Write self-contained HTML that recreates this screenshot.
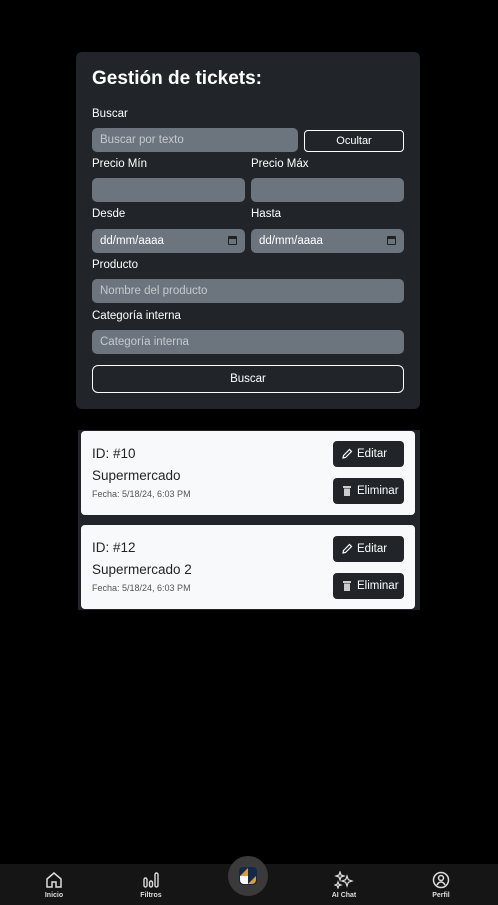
<!DOCTYPE html>
<html><head><meta charset="utf-8"><style>
*{box-sizing:border-box;margin:0;padding:0}
body{width:498px;height:905px;background:#000;font-family:"Liberation Sans",sans-serif;position:relative;overflow:hidden;color:#fff}
.card{position:absolute;left:76px;top:52px;width:344px;height:357px;background:#212529;border-radius:6px}
.abs{position:absolute}
h1{position:absolute;left:16px;top:16px;font-size:19px;font-weight:bold}
.lbl{position:absolute;font-size:11.5px}
.in{position:absolute;background:#6c757d;border-radius:5px;height:24px;line-height:24px;font-size:11.5px;color:#c5c9cd;padding:0 8px}
.in.v{color:#fff}
.btn{position:absolute;border:1px solid #fff;border-radius:4px;font-size:11px;text-align:center;color:#fff}
.cal{position:absolute;right:8px;top:7px;width:9px;height:9px;border:1.5px solid #222;border-top-width:3px;border-radius:1px}
.list{position:absolute;left:78px;top:430px;width:342px;height:180px;background:#212529}
.t{position:absolute;left:3px;width:334px;background:#f8f9fa;border-radius:4px;color:#212529}
.t .id{position:absolute;left:11px;top:15px;font-size:13.5px}
.t .n{position:absolute;left:11px;top:37px;font-size:13.5px}
.t .f{position:absolute;left:11px;top:58px;font-size:9px;color:#555}
.b{position:absolute;left:252px;width:71px;height:26px;line-height:26px;background:#212529;border-radius:4px;color:#fff;font-size:11.5px;padding-left:24px}
.b svg{position:absolute;left:8px;top:7px}
.nav{position:absolute;left:0;top:864px;width:498px;height:41px;background:#151515}
.ni{position:absolute;top:7px;width:60px;text-align:center;font-size:7px;font-weight:bold;color:#ddd}
.ni svg{display:block;margin:0 auto 3px}
</style></head><body>
<div class="card">
<h1>Gestión de tickets:</h1>
<div class="lbl" style="left:16px;top:56px">Buscar</div>
<div class="in" style="left:16px;top:76px;width:206px">Buscar por texto</div>
<div class="btn" style="left:228px;top:78px;width:100px;height:22px;line-height:20px">Ocultar</div>
<div class="lbl" style="left:16px;top:106px">Precio Mín</div>
<div class="lbl" style="left:175px;top:106px">Precio Máx</div>
<div class="in" style="left:16px;top:126px;width:153px"></div>
<div class="in" style="left:175px;top:126px;width:153px"></div>
<div class="lbl" style="left:16px;top:156px">Desde</div>
<div class="lbl" style="left:175px;top:156px">Hasta</div>
<div class="in v" style="left:16px;top:177px;width:153px">dd/mm/aaaa<span class="cal"></span></div>
<div class="in v" style="left:175px;top:177px;width:153px">dd/mm/aaaa<span class="cal"></span></div>
<div class="lbl" style="left:16px;top:207px">Producto</div>
<div class="in" style="left:16px;top:227px;width:312px">Nombre del producto</div>
<div class="lbl" style="left:16px;top:258px">Categoría interna</div>
<div class="in" style="left:16px;top:278px;width:312px">Categoría interna</div>
<div class="btn" style="left:16px;top:313px;width:312px;height:28px;line-height:26px;border-radius:6px;font-size:11.5px">Buscar</div>
</div>
<div class="list">
<div class="t" style="top:1px;height:84px"><div class="id">ID: #10</div><div class="n">Supermercado</div><div class="f">Fecha: 5/18/24, 6:03 PM</div>
<div class="b" style="top:10px"><svg width="12" height="12" viewBox="0 0 12 12" fill="none" stroke="#fff" stroke-width="1.2"><path d="M2 10l.5-2.5L8.5 1.5l2 2L4.5 9.5z"/></svg>Editar</div>
<div class="b" style="top:47px"><svg width="12" height="12" viewBox="0 0 12 12"><rect x="2" y="1" width="8" height="2" fill="#ccc"/><rect x="3" y="3.5" width="6" height="7.5" fill="#ccc"/></svg>Eliminar</div></div>
<div class="t" style="top:95px;height:84px"><div class="id">ID: #12</div><div class="n">Supermercado 2</div><div class="f">Fecha: 5/18/24, 6:03 PM</div>
<div class="b" style="top:11px"><svg width="12" height="12" viewBox="0 0 12 12" fill="none" stroke="#fff" stroke-width="1.2"><path d="M2 10l.5-2.5L8.5 1.5l2 2L4.5 9.5z"/></svg>Editar</div>
<div class="b" style="top:48px"><svg width="12" height="12" viewBox="0 0 12 12"><rect x="2" y="1" width="8" height="2" fill="#ccc"/><rect x="3" y="3.5" width="6" height="7.5" fill="#ccc"/></svg>Eliminar</div></div>
</div>
<div class="nav">
<div class="ni" style="left:24px"><svg width="18" height="18" viewBox="0 0 18 18" fill="none" stroke="#ddd" stroke-width="1.5"><path d="M2 8L9 2l7 6v8h-5v-5H7v5H2z"/></svg>Inicio</div>
<div class="ni" style="left:121px"><svg width="18" height="18" viewBox="0 0 18 18" fill="none" stroke="#ddd" stroke-width="1.4"><rect x="2" y="7" width="3" height="9" rx="1.5"/><rect x="7.5" y="10" width="3" height="6" rx="1.5"/><rect x="13" y="2" width="3" height="14" rx="1.5"/></svg>Filtros</div>
<div class="ni" style="left:314px"><svg width="20" height="18" viewBox="0 0 20 18" fill="none" stroke="#ddd" stroke-width="1.2"><path d="M6 1l1 3 3 1-3 1-1 3-1-3-3-1 3-1zM13 5l1.3 3.7L18 10l-3.7 1.3L13 15l-1.3-3.7L8 10l3.7-1.3zM4 11l.8 2.2L7 14l-2.2.8L4 17l-.8-2.2L1 14l2.2-.8z"/></svg>AI Chat</div>
<div class="ni" style="left:411px"><svg width="18" height="18" viewBox="0 0 18 18" fill="none" stroke="#ddd" stroke-width="1.5"><circle cx="9" cy="9" r="7.5"/><circle cx="9" cy="7" r="2.5"/><path d="M5 14c1-2 2.5-3 4-3s3 1 4 3"/></svg>Perfil</div>
</div>
<div class="abs" style="left:228px;top:856px;width:40px;height:40px;border-radius:50%;background:#3a3a3a"></div>
<svg class="abs" style="left:238px;top:866px" width="20" height="20" viewBox="0 0 20 20"><rect x="1" y="1" width="18" height="18" rx="4" fill="#0f2a4a"/><path d="M2 10L10 2v8z" fill="#e09a3a"/><path d="M2 10h8v8H6a4 4 0 0 1-4-4z" fill="#fff"/><path d="M10 18l8-8v4a4 4 0 0 1-4 4z" fill="#e09a3a"/></svg>
</body></html>
